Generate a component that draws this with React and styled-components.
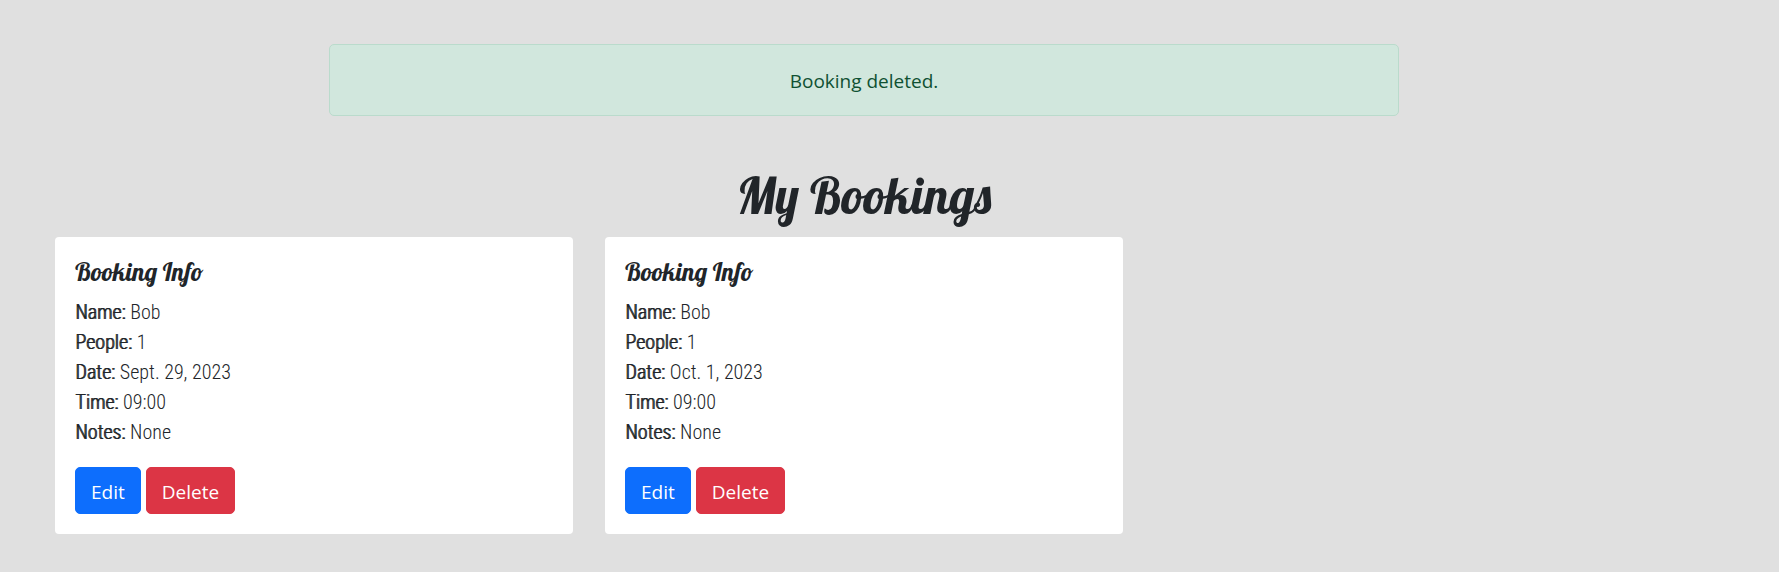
import React from 'react';
import styled, { createGlobalStyle } from 'styled-components';

const GlobalStyle = createGlobalStyle`
  *, *::before, *::after { box-sizing: border-box; }
  body {
    margin: 0;
    background: #e0e0e0;
    color: #212529;
    font: 400 20px/30px "Segoe UI", "Open Sans", sans-serif;
  }
`;

const scriptFont = '"Lobster", "Liberation Serif", serif';

const Page = styled.main`
  padding: 44px 90px 38px 39px;
`;

const Alert = styled.div`
  width: calc(65% - 2px);
  margin: 0 auto 51px;
  padding: 21px 20px 19px;
  border: 1px solid #badbcc;
  border-radius: 5px;
  background: #d1e7dd;
  color: #0f5132;
  font-size: 19px;
  text-align: center;
`;

const Title = styled.h1`
  margin: 0 0 12px;
  font: 500 50px/58px ${scriptFont};
  text-align: center;
`;

const Bookings = styled.section`
  display: grid;
  grid-template-columns: repeat(3, 1fr);
  gap: 32px;
  padding: 0 16px;
`;

const Card = styled.article`
  padding: 20px;
  border-radius: 4px;
  background: #fff;
`;

const CardTitle = styled.h2`
  margin: 0 0 10px;
  font: 500 25px/30px ${scriptFont};
`;

const Details = styled.dl`
  margin: 0 0 20px;
  font-family: "Roboto Condensed", "Liberation Sans Narrow", Roboto, sans-serif;
  font-weight: 300;
`;

const Detail = styled.div`
  display: flex;
  gap: 5px;
`;

const Label = styled.dt`
  text-shadow: 1px 0 currentColor;
`;

const Value = styled.dd`
  margin: 0;
`;

const Actions = styled.div`
  display: flex;
  gap: 5px;
`;

const Button = styled.button`
  height: 47px;
  padding: 2px 15px 0;
  border: 1px solid ${(p) => p.$color};
  border-radius: 5px;
  background: ${(p) => p.$color};
  color: #fff;
  font: inherit;
  font-size: 19px;
  cursor: pointer;
`;

const bookings = [
  { Name: 'Bob', People: '1', Date: 'Sept. 29, 2023', Time: '09:00', Notes: 'None' },
  { Name: 'Bob', People: '1', Date: 'Oct. 1, 2023', Time: '09:00', Notes: 'None' },
];

function BookingCard({ booking }) {
  return (
    <Card>
      <CardTitle>Booking Info</CardTitle>
      <Details>
        {Object.entries(booking).map(([label, value]) => (
          <Detail key={label}>
            <Label>{label}:</Label>
            <Value>{value}</Value>
          </Detail>
        ))}
      </Details>
      <Actions>
        <Button type="button" $color="#0d6efd">Edit</Button>
        <Button type="button" $color="#dc3545">Delete</Button>
      </Actions>
    </Card>
  );
}

export default function App() {
  return (
    <>
      <GlobalStyle />
      <Page>
        <Alert role="alert">Booking deleted.</Alert>
        <Title>My Bookings</Title>
        <Bookings>
          {bookings.map((booking) => (
            <BookingCard key={booking.Date} booking={booking} />
          ))}
        </Bookings>
      </Page>
    </>
  );
}
